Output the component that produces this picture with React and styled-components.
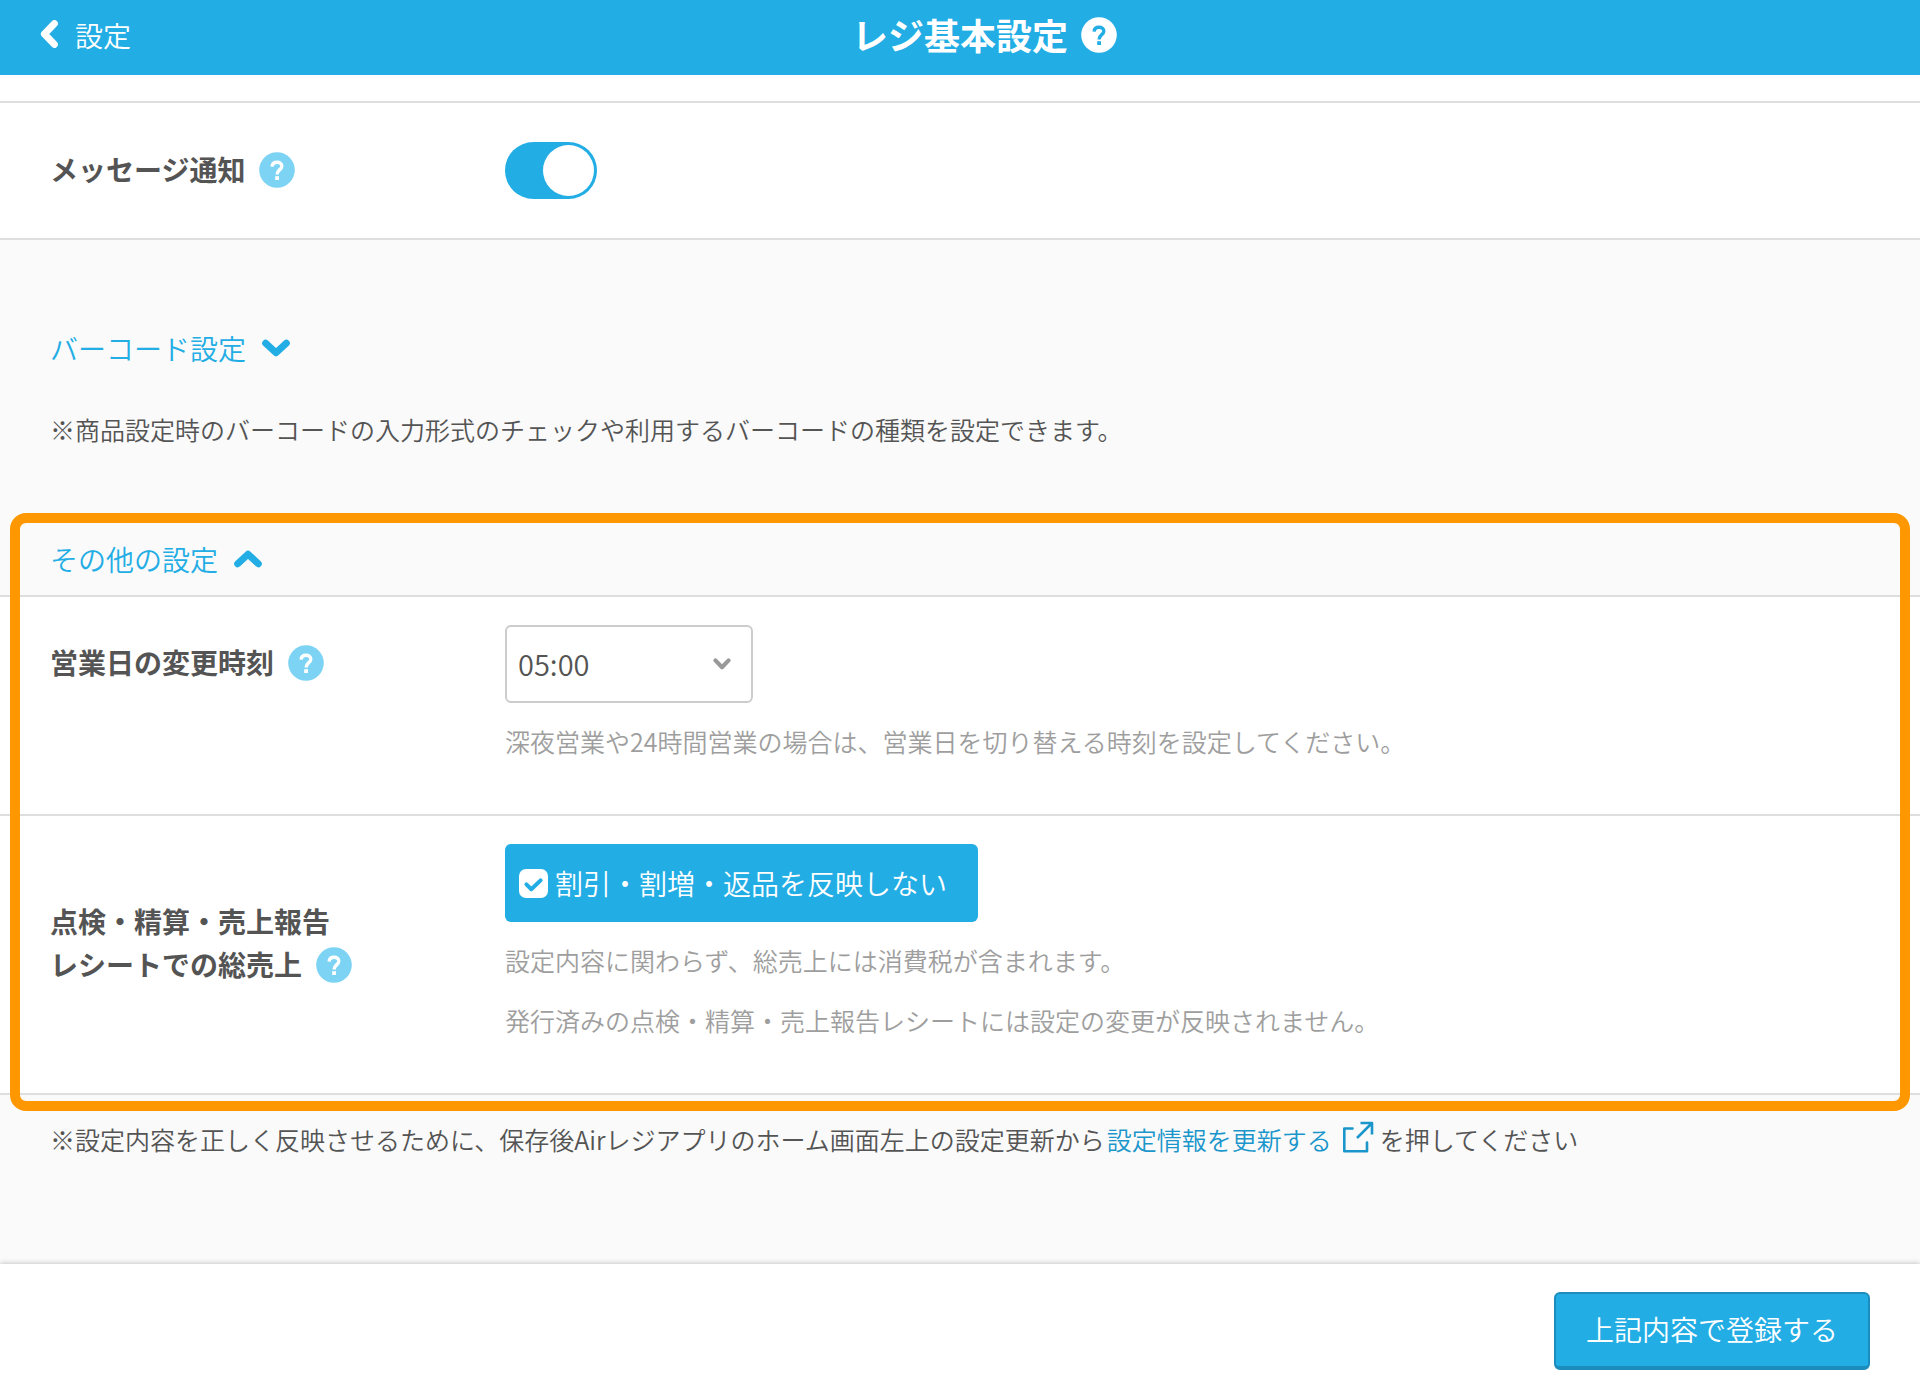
import { useState } from 'react'
import styled, { createGlobalStyle } from 'styled-components'

const GlobalStyle = createGlobalStyle`
    * {
        box-sizing: border-box;
    }

    body {
        margin: 0;
        color: #545454;
        background-color: #fafafa;
        font-family: "Noto Sans CJK JP", sans-serif;
        font-size: 25px;
        line-height: 36px;
        font-weight: 350;
    }

    button, select, input {
        font-family: inherit;
        font-weight: inherit;
    }
`

const Page = styled.div`
    min-height: 100vh;
    display: flex;
    flex-direction: column;
`

const Header = styled.header`
    height: 75px;
    padding: 0 40px;
    display: grid;
    grid-template-columns: 1fr auto 1fr;
    align-items: center;
    color: white;
    background-color: #22ade5;
`

const HeaderCell = styled.div`
    display: flex;
    align-items: center;
    padding-bottom: 6px;
`

const BackLink = styled.a`
    display: flex;
    align-items: center;
    gap: 16px;
    color: white;
    font-size: 28px;
    text-decoration: none;
`

const PageTitle = styled.h1`
    margin: 0;
    padding-bottom: 8px;
    font-size: 36px;
    line-height: 44px;
    font-weight: 700;
`

const HelpButton = styled.button`
    flex: none;
    display: flex;
    margin-left: ${props=>props.$gap}px;
    padding: 0;
    border: none;
    background: none;
    cursor: pointer;
`

const Main = styled.main`
    flex: 1;
`

const Panel = styled.div`
    background-color: white;
    border-bottom: 2px solid #dedede;
`

const Spacer = styled(Panel)`
    height: 28px;
`

const Row = styled(Panel)`
    display: grid;
    grid-template-columns: 455px 1fr;
    align-items: ${props=>props.$align || 'center'};
    padding: ${props=>props.$pad || '28px 50px 55px'};
`

const RowLabel = styled.div`
    padding: ${props=>props.$pad || '0'};
    font-size: 28px;
    line-height: 43px;
    font-weight: 700;
`

const LabelLine = styled.div`
    display: flex;
    align-items: center;
`

const Toggle = styled.input`
    appearance: none;
    display: flex;
    justify-content: ${props=>props.checked ? 'flex-end' : 'flex-start'};
    width: 92px;
    height: 57px;
    margin: 0;
    padding: 3px;
    border-radius: 29px;
    background-color: ${props=>props.checked ? '#22ade5' : '#cccccc'};
    cursor: pointer;

    &::after {
        content: '';
        width: 51px;
        height: 51px;
        border-radius: 50%;
        background-color: white;
    }
`

const BarcodeSection = styled.section`
    padding: 89px 50px 66px;
`

const OtherSection = styled.section`
    position: relative;
`

// frame drawn over the section, rows keep running to the window edge
const Highlight = styled.div`
    position: absolute;
    inset: 0 10px -16px;
    border: 10px solid #ff9800;
    border-radius: 16px;
    pointer-events: none;
`

const SectionHead = styled.div`
    padding: 27px 50px 17px;
    border-bottom: 2px solid #dedede;
`

const SectionTitle = styled.h2`
    margin: 0;
    font-size: 28px;
    line-height: 38px;
    font-weight: inherit;
`

const Accordion = styled.button`
    display: flex;
    align-items: center;
    gap: 15px;
    padding: 0;
    border: none;
    background: none;
    color: #22ade5;
    font-size: 28px;
    line-height: 38px;
    cursor: pointer;
`

const Note = styled.p`
    margin: 44px 0 0;
`

const Hint = styled.p`
    margin: ${props=>props.$top}px 0 0;
    color: #9e9e9e;
`

const SelectBox = styled.div`
    display: grid;
    grid-template-columns: 248px;
    align-items: center;

    > * {
        grid-area: 1 / 1;
    }

    > svg {
        justify-self: end;
        margin-right: 21px;
        pointer-events: none;
    }
`

const Select = styled.select`
    appearance: none;
    height: 78px;
    padding: 0 50px 2px 11px;
    border: 2px solid #cccccc;
    border-radius: 6px;
    background-color: white;
    color: #545454;
    font-size: 29px;
`

const CheckLabel = styled.label`
    display: flex;
    align-items: center;
    gap: 7px;
    width: 473px;
    height: 78px;
    padding: 0 14px;
    border-radius: 6px;
    color: white;
    background-color: #22ade5;
    font-size: 28px;
    cursor: pointer;
`

const CheckBox = styled.span`
    display: grid;

    > * {
        grid-area: 1 / 1;
    }

    > svg {
        pointer-events: none;
    }
`

const CheckInput = styled.input`
    appearance: none;
    width: 29px;
    height: 29px;
    margin: 0;
    border-radius: 7px;
    background-color: white;
`

const FootNote = styled.p`
    display: flex;
    align-items: center;
    margin: 0;
    padding: 26px 50px 60px;
`

const UpdateLink = styled.a`
    display: flex;
    align-items: center;
    gap: 10px;
    margin: 0 6px 0 2px;
    color: #1a96cb;
    text-decoration: none;

    > svg {
        margin-bottom: 4px;
    }
`

const Footer = styled.footer`
    display: flex;
    justify-content: flex-end;
    padding: 28px 50px 30px;
    background-color: white;
    box-shadow: 0 -1px 5px rgba(0, 0, 0, 0.2);
`

const SubmitButton = styled.button`
    width: 316px;
    height: 78px;
    padding: 0 0 2px;
    border: 2px solid #1a8dbc;
    border-bottom-width: 4px;
    border-radius: 6px;
    color: white;
    background-color: #22ade5;
    font-size: 28px;
    cursor: pointer;
`

function Help({ label, gap = 14, color = '#7dd3f3', mark = 'white' }) {
    return (
        <HelpButton type="button" aria-label={label} $gap={gap}>
            <svg width="36" height="36" viewBox="0 0 36 36" fill="none">
                <circle cx="18" cy="18" r="17.8" fill={color}/>
                <path d="M13.1 14.6C13.3 11.8 15.2 10.3 18 10.3C20.8 10.3 22.8 11.9 22.8 14.3C22.8 17.6 18.1 17.8 18.1 22.4" stroke={mark} strokeWidth="3.4"/>
                <rect x="16.2" y="24.2" width="3.8" height="3.8" fill={mark}/>
            </svg>
        </HelpButton>
    )
}

function Chevron({ up }) {
    return (
        <svg width="30" height="20" viewBox="0 0 30 20" fill="none">
            <path d={up ? 'M4.7 14.8L15 5.2L25.3 14.8' : 'M4.7 5.2L15 14.8L25.3 5.2'} stroke="#22ade5" strokeWidth="7" strokeLinecap="round" strokeLinejoin="round"/>
        </svg>
    )
}

function App() {
    const [notify, setNotify] = useState(true)
    const [exclude, setExclude] = useState(true)
    const [time, setTime] = useState('05:00')

    return (
        <Page>
            <GlobalStyle/>
            <Header>
                <HeaderCell>
                    <BackLink href="#settings">
                        <svg width="19" height="30" viewBox="0 0 19 30" fill="none">
                            <path d="M14.4 3.6L4.4 14L14.4 24.4" stroke="white" strokeWidth="7" strokeLinecap="round" strokeLinejoin="round"/>
                        </svg>
                        設定
                    </BackLink>
                </HeaderCell>
                <PageTitle>レジ基本設定</PageTitle>
                <HeaderCell>
                    <Help label="レジ基本設定のヘルプ" gap={13} color="white" mark="#22ade5"/>
                </HeaderCell>
            </Header>
            <Main>
                <Spacer/>
                <Row $pad="39px 50px">
                    <RowLabel $pad="0 0 2px">
                        <LabelLine>
                            <label htmlFor="notify">メッセージ通知</label>
                            <Help label="メッセージ通知のヘルプ"/>
                        </LabelLine>
                    </RowLabel>
                    <Toggle id="notify" type="checkbox" role="switch" checked={notify} onChange={e=>setNotify(e.target.checked)}/>
                </Row>
                <BarcodeSection>
                    <SectionTitle>
                        <Accordion type="button" aria-expanded="false">
                            バーコード設定
                            <Chevron/>
                        </Accordion>
                    </SectionTitle>
                    <Note>※商品設定時のバーコードの入力形式のチェックや利用するバーコードの種類を設定できます。</Note>
                </BarcodeSection>
                <OtherSection>
                    <SectionHead>
                        <SectionTitle>
                            <Accordion type="button" aria-expanded="true">
                                その他の設定
                                <Chevron up/>
                            </Accordion>
                        </SectionTitle>
                    </SectionHead>
                    <Row $align="start">
                        <RowLabel $pad="16px 0 0">
                            <LabelLine>
                                <label htmlFor="time">営業日の変更時刻</label>
                                <Help label="営業日の変更時刻のヘルプ"/>
                            </LabelLine>
                        </RowLabel>
                        <div>
                            <SelectBox>
                                <Select id="time" value={time} onChange={e=>setTime(e.target.value)}>
                                    <option>04:00</option>
                                    <option>05:00</option>
                                    <option>06:00</option>
                                </Select>
                                <svg width="20" height="14" viewBox="0 0 20 14" fill="none">
                                    <path d="M3.4 3.4L10 10.2L16.6 3.4" stroke="#999999" strokeWidth="4.2" strokeLinecap="round" strokeLinejoin="round"/>
                                </svg>
                            </SelectBox>
                            <Hint $top={20}>深夜営業や24時間営業の場合は、営業日を切り替える時刻を設定してください。</Hint>
                        </div>
                    </Row>
                    <Row>
                        <RowLabel $pad="4px 0 0">
                            <LabelLine>点検・精算・売上報告</LabelLine>
                            <LabelLine>
                                レシートでの総売上
                                <Help label="総売上のヘルプ"/>
                            </LabelLine>
                        </RowLabel>
                        <div>
                            <CheckLabel>
                                <CheckBox>
                                    <CheckInput type="checkbox" checked={exclude} onChange={e=>setExclude(e.target.checked)}/>
                                    {exclude && (
                                        <svg width="29" height="29" viewBox="0 0 29 29" fill="none">
                                            <path d="M7.4 15.4L12.3 20.2L21.6 11.4" stroke="#22ade5" strokeWidth="4" strokeLinecap="round" strokeLinejoin="round"/>
                                        </svg>
                                    )}
                                </CheckBox>
                                割引・割増・返品を反映しない
                            </CheckLabel>
                            <Hint $top={20}>設定内容に関わらず、総売上には消費税が含まれます。</Hint>
                            <Hint $top={24}>発行済みの点検・精算・売上報告レシートには設定の変更が反映されません。</Hint>
                        </div>
                    </Row>
                    <Highlight/>
                </OtherSection>
                <FootNote>
                    ※設定内容を正しく反映させるために、保存後Airレジアプリのホーム画面左上の設定更新から
                    <UpdateLink href="#update">
                        設定情報を更新する
                        <svg width="32" height="32" viewBox="0 0 32 32" fill="none" stroke="#1a96cb" strokeWidth="2.6" strokeLinejoin="round">
                            <path d="M10.5 7.5H2.3V30.2H25V21.5" strokeLinecap="round"/>
                            <path d="M18.5 2H30V13.5M30 2L15 17"/>
                        </svg>
                    </UpdateLink>
                    を押してください
                </FootNote>
            </Main>
            <Footer>
                <SubmitButton type="button">上記内容で登録する</SubmitButton>
            </Footer>
        </Page>
    )
}

export default App
